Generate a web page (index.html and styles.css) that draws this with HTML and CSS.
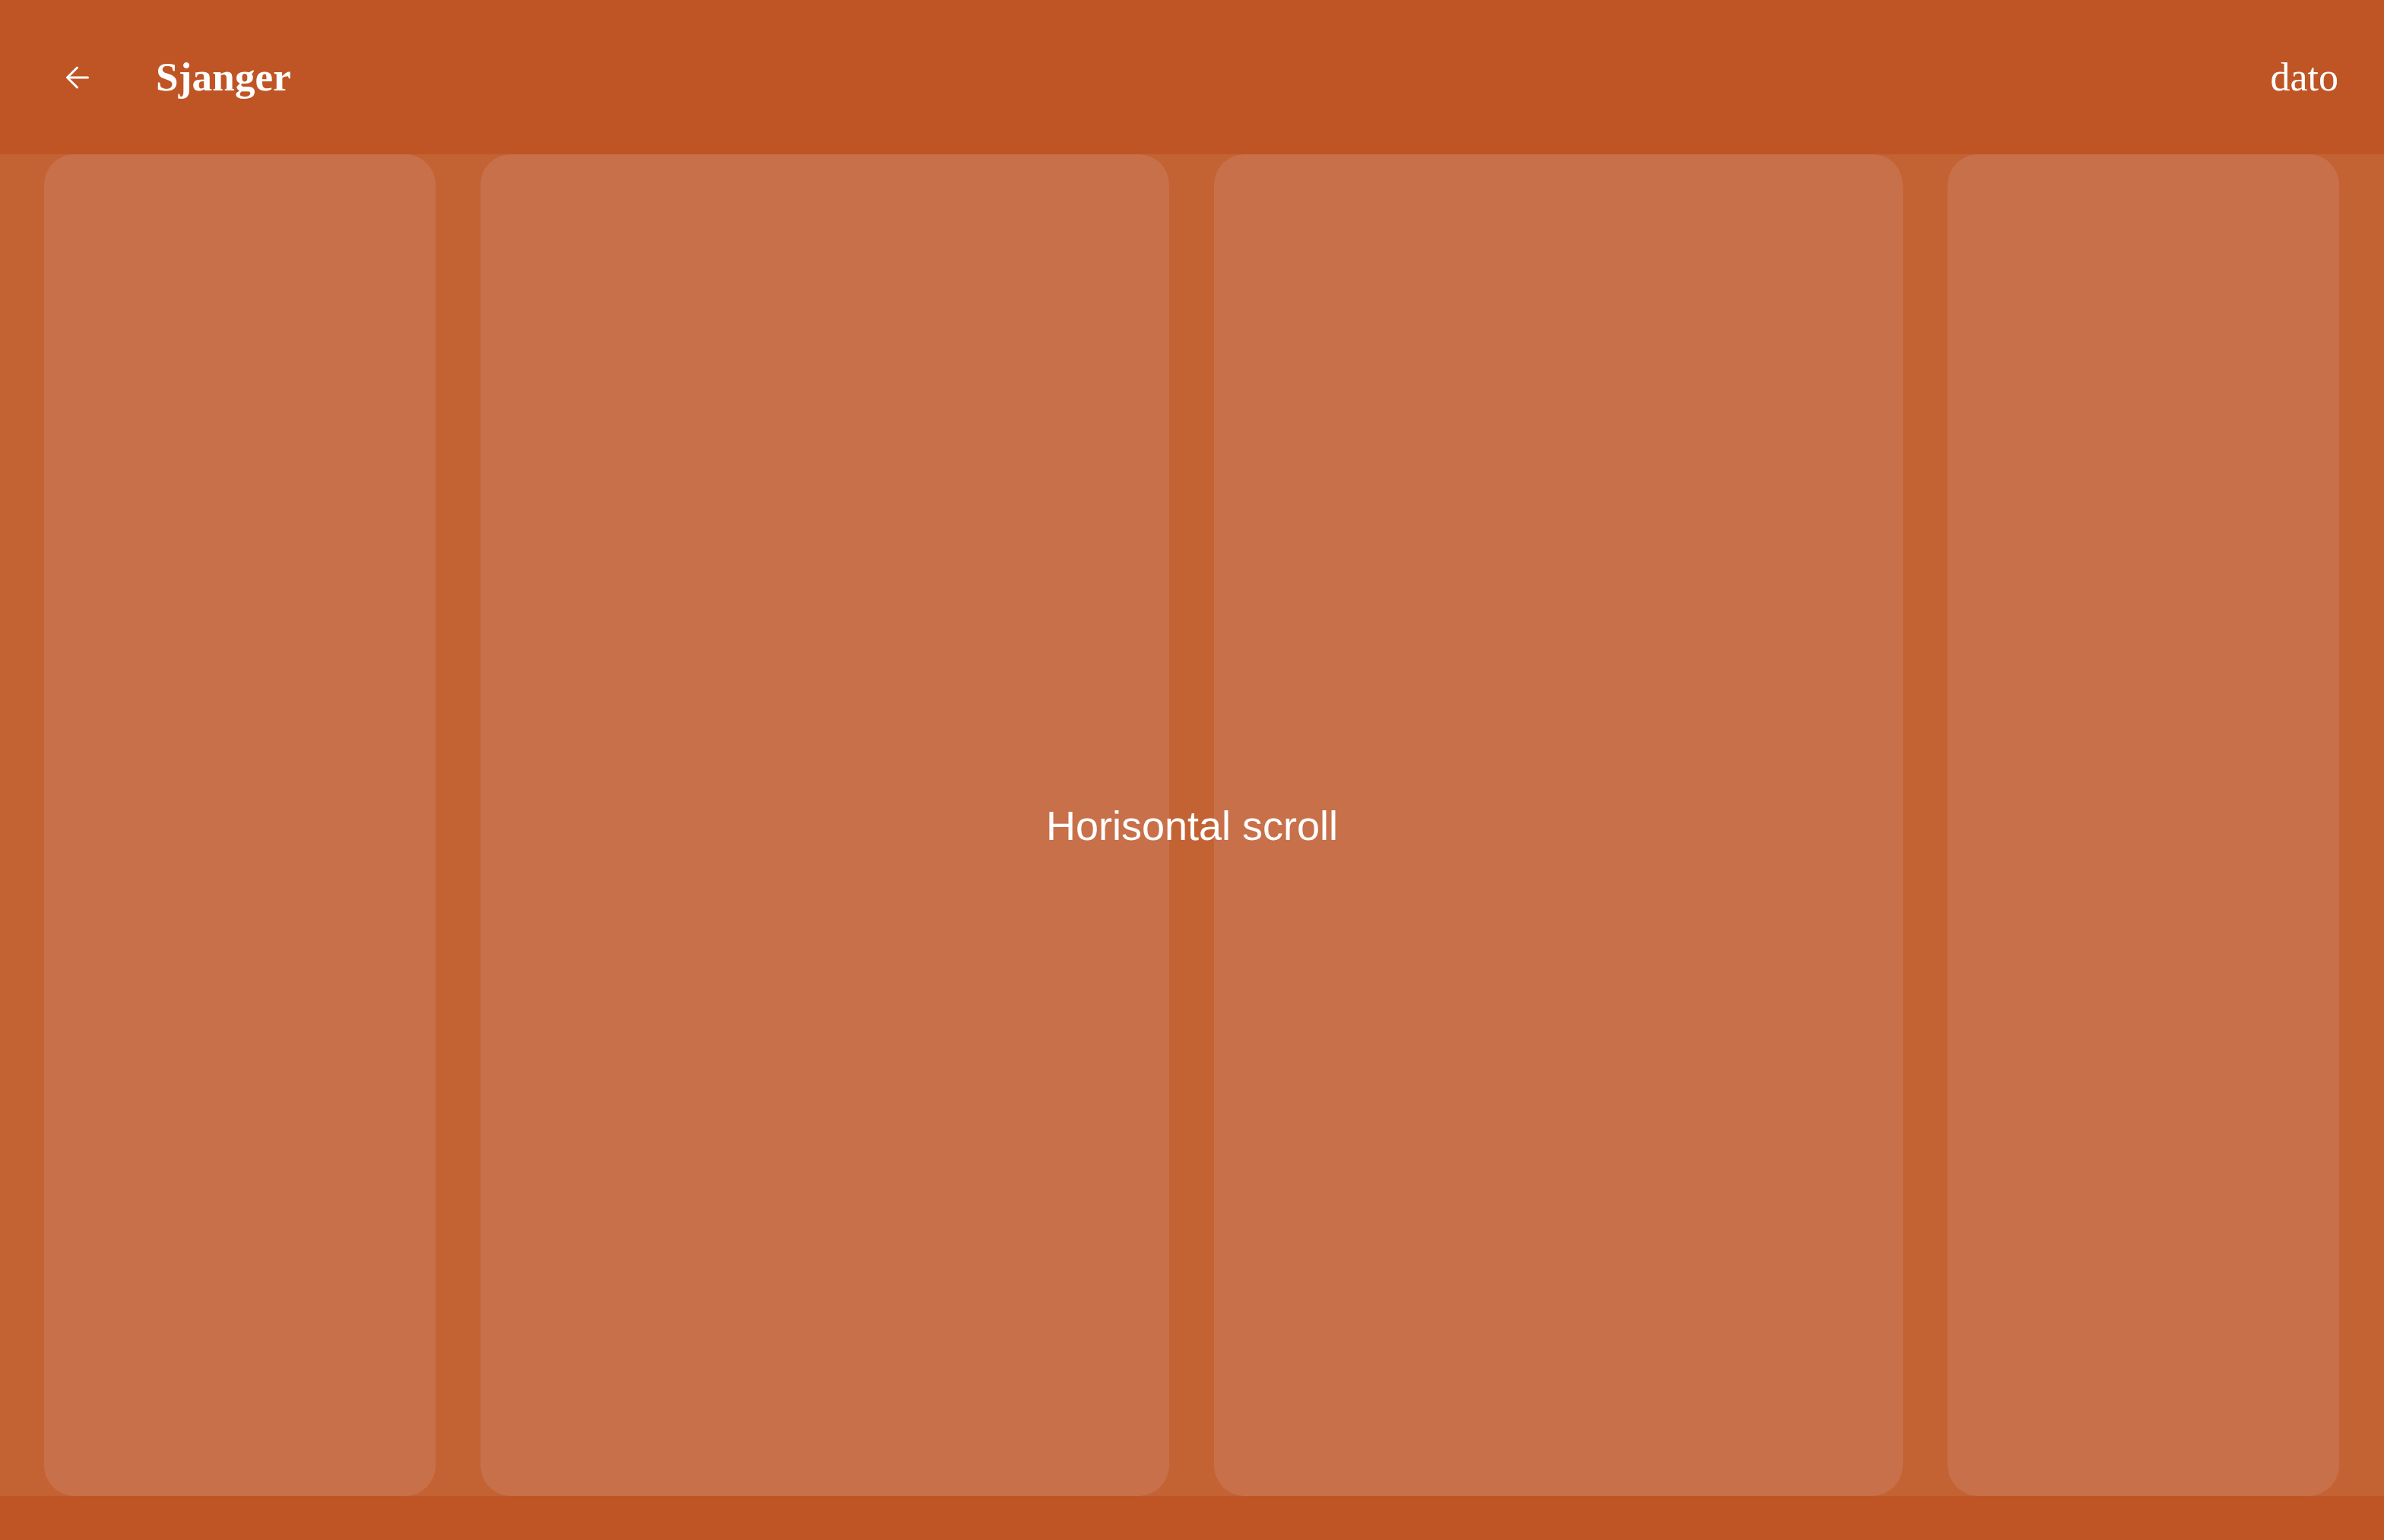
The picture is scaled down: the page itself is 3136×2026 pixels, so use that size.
FILE: index.html
```html
<!DOCTYPE html>
<html lang="no">
<head>
  <meta charset="UTF-8">
  <meta name="viewport" content="width=device-width, initial-scale=1.0">
  <title>Sjanger</title>
  <link rel="stylesheet" href="styles.css">
</head>
<body>
  <div id="top-bar">
    <button class="back-btn" aria-label="Tilbake">
      <svg width="32" height="32" viewBox="0 0 32 32" fill="none" stroke="white" stroke-width="3" stroke-linecap="round" stroke-linejoin="round">
        <path d="M29.5 16H3"/>
        <path d="M15.5 3L2.5 16L15.5 29"/>
      </svg>
    </button>
    <h1>Sjanger</h1>
    <div class="sort-label">dato</div>
  </div>

  <div id="scroll-area">
    <div class="cards">
      <div class="card"></div>
      <div class="card"></div>
      <div class="card"></div>
      <div class="card"></div>
    </div>
    <div class="scroll-hint">Horisontal scroll</div>
  </div>

  <div id="bottom-bar"></div>
</body>
</html>
```

FILE: styles.css
```css
html, body {
  margin: 0;
  padding: 0;
  height: 100%;
  width: 100%;
  background-color: #bf5525;
  color: white;
  overflow: hidden;
}
body {
  display: flex;
  flex-direction: column;
}
#top-bar {
  height: 203px;
  flex: 0 0 auto;
  display: flex;
  align-items: center;
  padding: 0 60px 0 86px;
  box-sizing: border-box;
  background-color: #bf5525;
}
.back-btn {
  background: none;
  border: none;
  padding: 0;
  margin: 0;
  width: 32px;
  height: 32px;
  cursor: pointer;
  display: flex;
}
#top-bar h1 {
  margin: 0 0 0 87px;
  font-family: "Liberation Serif", serif;
  font-weight: bold;
  font-size: 53px;
  line-height: 1;
  letter-spacing: 0.2px;
}
.sort-label {
  margin-left: auto;
  font-family: "Liberation Serif", serif;
  font-size: 52px;
  line-height: 1;
}
#scroll-area {
  position: relative;
  flex: 1 1 auto;
  background-color: #c36334;
  overflow-x: auto;
}
.cards {
  height: 100%;
  display: grid;
  grid-template-columns: 515px 906px 906px 515px;
  gap: 59px;
  padding: 0 58px;
  box-sizing: border-box;
}
.card {
  background-color: #c8704a;
  border-radius: 40px;
}
.scroll-hint {
  position: absolute;
  top: 50%;
  left: 50%;
  transform: translate(-50%, -50%);
  font-family: "Liberation Sans", Arial, sans-serif;
  font-size: 54px;
  white-space: nowrap;
}
#bottom-bar {
  height: 58px;
  flex: 0 0 auto;
  background-color: #bf5525;
}
```
